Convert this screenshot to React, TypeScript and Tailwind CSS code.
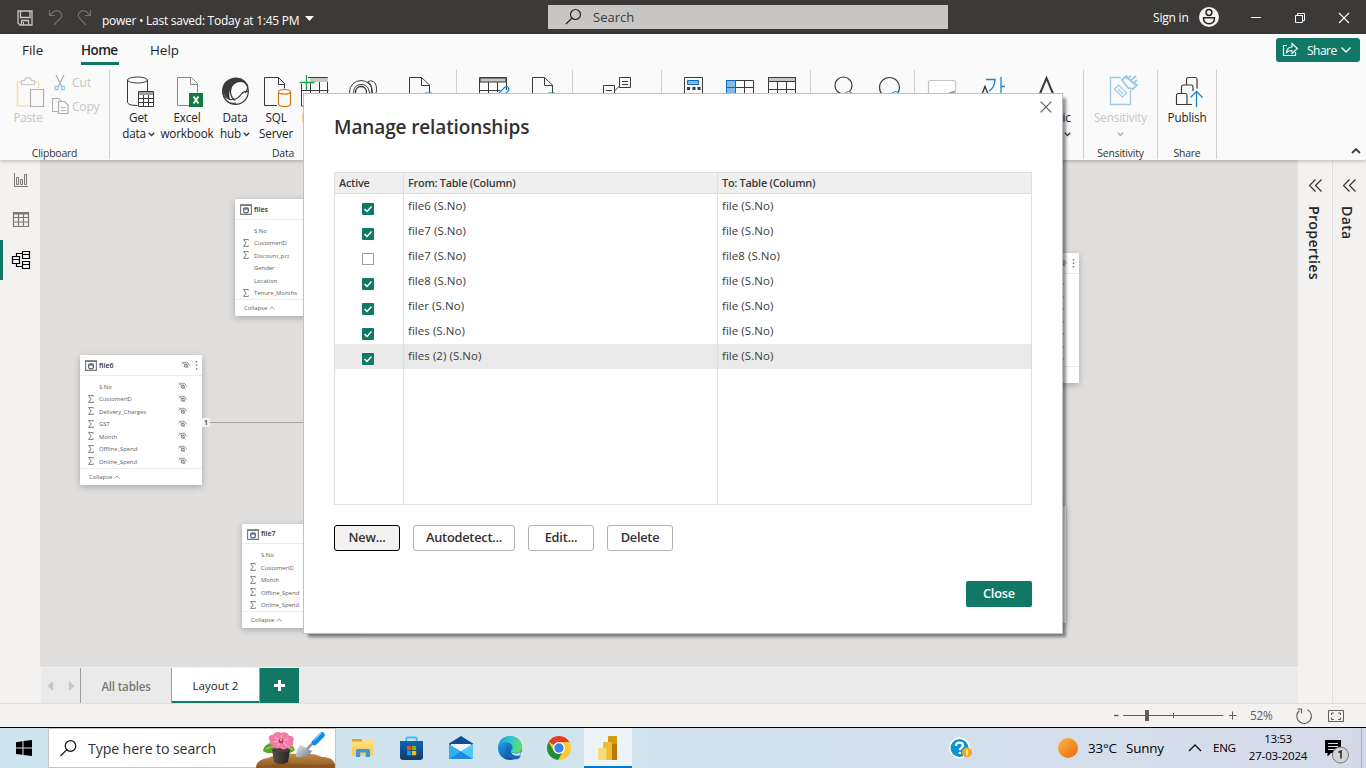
import React from 'react';

type IconProps = { x: number; y: number; w: number; h: number; children: React.ReactNode; className?: string };

/* Icon drawn in window coordinates: the view box starts at (x, y). */
function Icon({ x, y, w, h, children, className = '' }: IconProps) {
  return (
    <svg width={w} height={h} viewBox={`${x} ${y} ${w} ${h}`} fill="none" className={`block shrink-0 ${className}`}>
      {children}
    </svg>
  );
}

function Chevron({ color = '#3b3a39' }: { color?: string }) {
  return (
    <svg width="7" height="5" viewBox="0 0 7 5" fill="none" className="block">
      <path d="M0.8 0.8 3.5 3.6 6.2 0.8" stroke={color} strokeWidth="1.4" />
    </svg>
  );
}

/* ------------------------------------------------------------ title bar */

function TitleBar() {
  return (
    <header className="flex h-[34px] shrink-0 bg-[#3b3a39] text-white">
      <Icon x={0} y={0} w={102} h={34}>
        <path d="M18 11h14v14h-12l-2-2zM20.500 11v6.500h9.500v-6.500M21.500 25v-4.500h7v4.500" stroke="#c8c6c4" strokeWidth="1.300" />
        <path d="M23.500 22v3" stroke="#c8c6c4" />
        <path d="M49.500 10v5.500h5.500M49.800 15.300l3.500-3.300c2-1.600 4.500-1.700 6.500-.2 2.200 1.900 2.300 4.600.5 6.700l-6.300 6.300" stroke="#73716f" strokeWidth="1.200" />
        <path d="M90.500 10v5.500h-5.500M90.200 15.300l-3.500-3.300c-2-1.600-4.500-1.700-6.500-.2-2.200 1.900-2.300 4.600-.5 6.700l6.300 6.300" stroke="#73716f" strokeWidth="1.200" />
      </Icon>
      <div className="flex w-[446px] items-center pt-[7px] text-[12px] tracking-[-0.27px]">
        <span className="whitespace-nowrap">power • Last saved: Today at 1:45 PM</span>
        <svg width="9" height="5" viewBox="0 0 9 5" className="mb-[4px] ml-[6px]"><path d="M0 0h9L4.500 5z" fill="#fff" /></svg>
      </div>
      <div className="mr-[204px] mt-[5px] flex h-6 w-[400px] items-center bg-[#c8c6c4] text-[13px] text-[#3b3a39]">
        <Icon x={548} y={5} w={45} h={24}>
          <circle cx="575.500" cy="14.500" r="5" stroke="#252423" strokeWidth="1.200" />
          <path d="M571.800 18.300 566 24" stroke="#252423" strokeWidth="1.200" />
        </Icon>
        <span className="pt-px">Search</span>
      </div>
      <div className="flex w-[46px] items-center whitespace-nowrap pl-px pt-[2px] text-[12px] tracking-[-0.2px]">Sign in</div>
      <Icon x={1198} y={0} w={168} h={34}>
        <circle cx="1209" cy="17" r="10" fill="#f3f2f1" />
        <circle cx="1209" cy="12.500" r="2.900" stroke="#252423" strokeWidth="1.500" />
        <path d="M1203.500 17.800h11c.2 3.800-2.200 5.900-5.500 5.900s-5.700-2.100-5.500-5.900z" stroke="#252423" strokeWidth="1.500" />
        <path d="M1251 17.500h10" stroke="#fff" />
        <path d="M1295.500 15.500h7v7h-7zM1297.500 15.500v-2h7v7h-2" stroke="#fff" />
        <path d="M1339 13l10 10M1349 13l-10 10" stroke="#fff" strokeWidth="1.100" />
      </Icon>
    </header>
  );
}

/* --------------------------------------------------------------- ribbon */

function MenuRow() {
  return (
    <div className="flex h-8 shrink-0 justify-between text-[13.400px] text-[#252423]">
      <nav className="flex pl-[22px]">
        <span className="w-[59px] pt-[6px]">File</span>
        <span className="mr-[31px] h-[31px] w-[38px] whitespace-nowrap border-b-[3px] border-[#117865] pt-[6px] font-semibold tracking-[-0.55px]">Home</span>
        <span className="pt-[6px]">Help</span>
      </nav>
      <div className="mr-[6px] mt-[4px] flex h-6 w-[84px] items-center rounded-[3px] bg-[#117865] text-[12px] font-medium text-white">
        <Icon x={1276} y={38} w={31} h={24}>
          <path d="M1287 45.500h-3.500v10h12v-3.500" stroke="#fff" strokeWidth="1.200" />
          <path d="M1286.500 52.500c.5-4 2.500-5.500 5.500-5.500v-3.500l5.500 5-5.500 5v-3c-2.500 0-4 .5-5.500 2z" stroke="#fff" strokeWidth="1.100" />
        </Icon>
        <span className="w-[34px] pt-[2px] tracking-[-0.5px]">Share</span>
        <svg width="10" height="6" viewBox="0 0 10 6" fill="none"><path d="M.5.5 5 5 9.500.5" stroke="#fff" strokeWidth="1.300" /></svg>
      </div>
    </div>
  );
}

type CellProps = { x: number; w: number; label?: string; second?: string; arrow?: boolean; faded?: boolean; children: React.ReactNode };

function RibbonButton({ x, w, label, second, arrow, faded, children }: CellProps) {
  return (
    <div className={`flex shrink-0 flex-col items-center text-[11.700px] leading-4 tracking-[-0.14px] ${faded ? 'text-[#c8c6c4]' : 'text-[#252423]'}`}>
      <Icon x={x} y={74} w={w} h={36}>{children}</Icon>
      <div className="-mt-px flex h-4 w-0 justify-center whitespace-nowrap">{label}</div>
      <div className="flex h-4 w-0 items-center justify-center gap-[2px] whitespace-nowrap">
        {second}
        {arrow && <span className="pt-[3px]"><Chevron color={faded ? '#b3b0ad' : '#3b3a39'} /></span>}
      </div>
    </div>
  );
}

function Group({ name, className, children }: { name?: string; className: string; children: React.ReactNode }) {
  return (
    <section className={`flex h-[89px] shrink-0 flex-col border-r border-[#d2d0ce] ${className}`}>
      <div className="flex h-[75px] shrink-0 pt-[4px]">{children}</div>
      <div className="h-[14px] text-center text-[10.400px] leading-[17px] tracking-[-0.2px] text-[#323130]">{name}</div>
    </section>
  );
}

const ink = '#3b3a39';

function Ribbon() {
  return (
    <div className="relative flex h-[94px] shrink-0 pt-[4px]">
      <Group name="Clipboard" className="w-[110px]">
        <RibbonButton x={0} w={56} label="Paste" faded>
          <path d="M22 82h-4.500v24H31M34 82h4.500v6" stroke="#f5dfb8" strokeWidth="1.700" />
          <path d="M21.500 84.500v-4h3c.4-2 1.500-3 3.500-3s3 1 3.500 3h3v4z" stroke="#c8c6c4" strokeWidth="1.200" />
          <path d="M30.500 89.500h13v17h-13z" fill="#fafafa" stroke="#b3b0ad" strokeWidth="1.200" />
        </RibbonButton>
        <div className="-mt-[3px] flex flex-col text-[12px] text-[#c8c6c4]">
          <div className="flex h-6 items-center">
            <Icon x={56} y={71} w={16} h={24} className="-ml-[2px] mr-[2px]">
              <path d="M58 75l6 12M66 75l-6 12" stroke="#b3b0ad" strokeWidth="1.300" />
              <path d="M57 86.500h3v3h-3zM63.500 86.500h3v3h-3z" stroke="#9bc7e4" strokeWidth="1.300" />
            </Icon>
            <span>Cut</span>
          </div>
          <div className="flex h-6 items-center">
            <Icon x={52} y={95} w={20} h={24} className="-ml-[4px]">
              <path d="M59 111.500h-6.500v-13h6l3 2.500" stroke="#b3b0ad" strokeWidth="1.200" />
              <path d="M58.500 101.500h6l3.500 3.500v8.500h-9.500zM61 107.500h4.500M61 110.500h4.500" stroke="#b3b0ad" strokeWidth="1.200" />
            </Icon>
            <span className="tracking-[-0.2px]">Copy</span>
          </div>
        </div>
      </Group>
      <Group name="Data" className="w-[347px] pl-[4px] [&>div:last-child]:-ml-[4px]">
        <RibbonButton x={114} w={49} label="Get" second="data" arrow>
          <ellipse cx="137.500" cy="80" rx="10" ry="3" stroke={ink} />
          <path d="M127.500 80v22c0 2 3 3.500 10 3.500M147.500 80v11" stroke={ink} />
          <path d="M138.500 91.500h15v15h-15zM138.500 98.500h15M138.500 102.500h15M143.500 94v12.500M148.500 94v12.500" fill="#fff" stroke={ink} />
          <path d="M139 92h14v3h-14z" fill="#a19f9d" />
        </RibbonButton>
        <RibbonButton x={163} w={48} label="Excel" second="workbook">
          <path d="M189 105.500h-11.500v-28h14l6 6v9M190.500 77.500v7h7" stroke="#8a8886" />
          <path d="M189 93h14v14h-14z" fill="#107c41" />
          <path d="M193.500 96.500l5 7M198.500 96.500l-5 7" stroke="#fff" strokeWidth="1.800" />
        </RibbonButton>
        <RibbonButton x={211} w={48} label="Data" second="hub" arrow>
          <circle cx="235.500" cy="91.500" r="12.800" stroke={ink} strokeWidth="1.200" />
          <path d="M230 79c7-3.500 15-.2 17.500 5.500-5-3.500-10-3.500-14 .5-4 4-5 9-3.500 14-4-1-7.500-6-7.500-10 0-4 3-8.500 7.500-10z" fill={ink} />
          <path d="M241 80c-6 0-10.500 5-10.500 11.500 0 4 2 7 4.500 9M222.500 92c1 5 5.500 8 10.500 7.500 4-.5 6-2 8-5 2-2.500 4-3.500 7-3M247 84c1.500 3 .5 6-1.500 9M226 100c2 3 7 4 10 3" stroke={ink} strokeWidth="1.200" />
        </RibbonButton>
        <RibbonButton x={259} w={34} label="SQL" second="Server">
          <path d="M277 105.500h-12.500v-28h14l6 6v5M278.500 77.500v7h6" stroke={ink} />
          <path d="M278.500 92v12c0 1.500 2.500 2.500 6.500 2.500s5.500-1 5.500-2.500V92" fill="#fafafa" stroke="#d8730f" strokeWidth="1.200" />
          <ellipse cx="284.500" cy="91.800" rx="6" ry="2.300" fill="#fafafa" stroke="#d8730f" strokeWidth="1.200" />
        </RibbonButton>
        <RibbonButton x={293} w={46} label="Enter">
          <path d="M301.500 84v22h26v-28.500H308M301.500 90.500h27M310.500 82v12M319.500 82v12" stroke={ink} />
          <path d="M310 78h18v4h-18z" fill="#c8c6c4" />
          <path d="M306.500 75v15M299.500 82.500h15" stroke="#16a34a" strokeWidth="1.300" />
        </RibbonButton>
        <RibbonButton x={339} w={48}>
          <circle cx="361" cy="92" r="11.500" stroke={ink} />
          <circle cx="361" cy="92" r="5.500" stroke={ink} strokeWidth="1.300" />
          <path d="M354 94c-1.500-6 3-10 8-9.500 5 .4 7 4 7.500 9M367 83c1-3 9-4 9.500 5 .2 2 0 4-1 6M368 82c4 2 4 8 3 12" stroke={ink} />
        </RibbonButton>
        <RibbonButton x={387} w={64}>
          <path d="M409.500 106v-28.500h12l8 7.500v8M421.500 77.500v8h8" stroke={ink} />
          <path d="M425 93h7" stroke="#1a86d0" />
        </RibbonButton>
      </Group>
      <Group className="w-[116px] pl-[12px]">
        <RibbonButton x={469} w={48}>
          <path d="M479.500 106V77.500h27V90M479.500 90.500H500M488.500 82v12M497.500 82v10" stroke={ink} />
          <path d="M480 78h26v4h-26z" fill="#c8c6c4" stroke={ink} />
          <path d="M499 93l6-6q2.500-1.500 3.500 1t-1 3.500l-4 4" stroke="#1a86d0" strokeWidth="1.300" />
        </RibbonButton>
        <RibbonButton x={517} w={52}>
          <path d="M532.500 106v-28.500h12l8 7.500v8M544.500 77.500v8h8" stroke={ink} />
          <path d="M548 93h7" stroke="#16a34a" />
        </RibbonButton>
      </Group>
      <Group className="w-[89px]">
        <RibbonButton x={573} w={88}>
          <path d="M619.500 77.500h11v10h-11zM603.500 85.500h11v12h-11zM614.500 91l5-5M622 81.500h6M622 84.500h6M606 90.500h6M606 93.500h6" stroke={ink} />
        </RibbonButton>
      </Group>
      <Group className="w-[149px]">
        <RibbonButton x={662} w={54}>
          <path d="M684.500 106V77.500h18V106" stroke={ink} />
          <path d="M687.500 80.500h11v4h-11z" fill="#83bbe8" stroke="#0f6cbd" />
          <path d="M687 87h3v3h-3zM692.500 87h3v3h-3zM697.500 87h3v3h-3z" fill={ink} />
        </RibbonButton>
        <RibbonButton x={716} w={48}>
          <path d="M727 81h8v18h-8z" fill="#83bbe8" />
          <path d="M726.500 100V80.500h27V100M735.500 81v15M744.500 81v15M726.500 87.500h27" stroke={ink} />
          <path d="M726.500 94V80.500h9M726.500 87.500h9v6M735.500 81v12" stroke="#0f6cbd" />
        </RibbonButton>
        <RibbonButton x={764} w={44}>
          <path d="M768.500 106V77.500h27V106M777.500 82v12M786.500 82v12M768.500 89.500h27" stroke={ink} />
          <path d="M768.500 77.500h27v4h-27z" fill="#c8c6c4" stroke={ink} />
        </RibbonButton>
      </Group>
      <Group className="w-[104px] pl-[10px]">
        <RibbonButton x={821} w={46}>
          <circle cx="843.500" cy="85.500" r="8.500" stroke={ink} strokeWidth="1.200" />
          <circle cx="848.500" cy="95.500" r="4" fill="#fafafa" stroke="#1a86d0" />
        </RibbonButton>
        <RibbonButton x={867} w={46}>
          <circle cx="889.500" cy="87.500" r="10" stroke={ink} strokeWidth="1.200" />
          <circle cx="895.500" cy="95.500" r="4" fill="#fafafa" stroke="#1a86d0" />
        </RibbonButton>
      </Group>
      <Group className="w-[169px]">
        <RibbonButton x={915} w={54}>
          <rect x="928.500" y="80.500" width="27" height="20" rx="2" fill="#fff" stroke="#c8c6c4" strokeWidth="1.200" />
          <path d="M949 93.500l6-2" stroke="#a19f9d" strokeWidth="2" />
        </RibbonButton>
        <RibbonButton x={969} w={54}>
          <path d="M982 94l3-7.500 3 7.500" stroke={ink} strokeWidth="1.400" />
          <path d="M986 79.500h9c0 5-2 9-6 11.500M1001 77v18M1001 86.500h4" stroke="#1a86d0" strokeWidth="1.300" />
        </RibbonButton>
        <RibbonButton x={1023} w={46} label="Linguistic" second="schema" arrow>
          <path d="M1039 96l7.500-18 7.500 18" stroke={ink} strokeWidth="2" />
        </RibbonButton>
      </Group>
      <Group name="Sensitivity" className="w-[74px]">
        <RibbonButton x={1084} w={73} label="Sensitivity" arrow faded>
          <path d="M1121 77.500h-10.500v27h20V90" stroke="#9dcbe8" strokeWidth="1.400" />
          <path d="M1114.500 89l4-4 8 8-4 4zM1118 89l5 5" stroke="#9dcbe8" strokeWidth="1.200" />
          <path d="M1122 80l4-4 6 6 5 3-4 4-5-1zM1126 79l5-3M1130 81l6-5M1133 84l4-4" stroke="#9dcbe8" strokeWidth="1.800" />
        </RibbonButton>
      </Group>
      <Group name="Share" className="w-[59px]">
        <RibbonButton x={1158} w={58} label="Publish">
          <path d="M1176.500 104.500v-9q0-2 2-2h7q1.500 0 1.500 2v9zM1181.500 93v-6q0-2 2-2h8q1.500 0 1.500 2v4M1187 104.500h5M1186.500 85v-5.500q0-2 2-2h7q1.500 0 1.500 2v9" stroke={ink} strokeWidth="1.200" />
          <path d="M1196.500 107V91.500M1190.500 97.500l6-6 6 6" stroke="#1a86d0" strokeWidth="1.300" />
        </RibbonButton>
      </Group>
      <div className="flex flex-1 items-end justify-end pb-[5px] pr-[5px]">
        <svg width="10" height="8" viewBox="0 0 10 8" fill="none"><path d="M1 6 5 2l4 4" stroke={ink} strokeWidth="1.800" /></svg>
      </div>
    </div>
  );
}

/* --------------------------------------------------------- model canvas */

function HiddenEye() {
  return (
    <svg width="9" height="8" viewBox="0 0 9 8" fill="none" className="block">
      <path d="M.5 3.200C2 1.600 3.300 1.200 4.800 1.200S7.800 2.200 8.500 4.500" stroke="#7a7876" strokeWidth=".8" />
      <circle cx="4.800" cy="4.600" r="1.600" stroke="#605e5c" strokeWidth=".9" />
      <path d="M1 .5 7.500 7.200" stroke="#7a7876" strokeWidth=".7" />
    </svg>
  );
}

function TableCard({ name, fields, className }: { name: string; fields: [string, boolean][]; className: string }) {
  return (
    <div className={`absolute w-[122px] rounded-[1px] bg-white text-[5.900px] text-[#605e5c] shadow-[0_2px_7px_rgba(0,0,0,0.25)] ${className}`}>
      <div className="flex h-[20.500px] items-center border-b border-[#edebe9] pl-[5px] pr-[4px] pt-px text-[6.600px] font-semibold text-[#323130]">
        <svg width="12" height="11" viewBox="0 0 12 11" fill="none" className="mt-px">
          <path d="M.6 1h10.800v9.400H.6z" stroke="#7a7876" strokeWidth="1.100" />
          <path d="M0 .3h12v1.700H0z" fill="#7a7876" />
          <rect x="3.600" y="3.900" width="4.800" height="5" rx="1.800" stroke="#4a5f78" strokeWidth="1.200" />
          <path d="M3.600 5h4.800" stroke="#4a5f78" strokeWidth="1.200" />
        </svg>
        <span className="ml-[2px] flex-1 pt-px text-[7px]">{name}</span>
        <HiddenEye />
        <svg width="3" height="9" viewBox="0 0 3 9" className="ml-[5px]"><path d="M.8 0h1.400v1.400H.8zM.8 3.500h1.400v1.400H.8zM.8 7h1.400v1.400H.8z" fill="#7a7876" /></svg>
      </div>
      <div className="pt-[4.500px]">
        {fields.map(([field, numeric]) => (
          <div key={field} className="flex h-[12.500px] items-center pl-[8px] pr-[15px]">
            <span className="w-[11px]">
              {numeric && <svg width="6" height="8" viewBox="0 0 6 8" fill="none" className="block"><path d="M5.300 1.500V.6H.6L3.200 4 .6 7.400h4.700v-1" stroke="#605e5c" strokeWidth=".8" /></svg>}
            </span>
            <span className="flex-1 pt-[2px]">{field}</span>
            <HiddenEye />
          </div>
        ))}
      </div>
      <div className="flex h-[17px] items-center gap-[2px] border-t border-[#edebe9] pl-[9px]">
        <span className="pt-px">Collapse</span>
        <svg width="6" height="4" viewBox="0 0 6 4" fill="none"><path d="M.5 3.500 3 .8l2.500 2.700" stroke="#7a7876" strokeWidth=".7" /></svg>
      </div>
    </div>
  );
}

const file6: [string, boolean][] = [['S.No', false], ['CustomerID', true], ['Delivery_Charges', true], ['GST', true], ['Month', true], ['Offline_Spend', true], ['Online_Spend', true]];
const files: [string, boolean][] = [['S.No', false], ['CustomerID', true], ['Discount_pct', true], ['Gender', false], ['Location', false], ['Tenure_Months', true]];
const file7: [string, boolean][] = [['S.No', false], ['CustomerID', true], ['Month', true], ['Offline_Spend', true], ['Online_Spend', true]];

function Canvas() {
  return (
    <div className="relative h-[507px] overflow-hidden bg-[#e0dfdd]">
      <TableCard name="files" fields={files} className="left-[195px] top-[39px]" />
      <TableCard name="file6" fields={file6} className="left-[40px] top-[195px]" />
      <TableCard name="file7" fields={file7} className="left-[202px] top-[363.500px]" />
      <TableCard name="" fields={file6} className="left-[917px] top-[93px]" />
      <div className="absolute left-[904px] top-[346px] h-[117px] w-[122px] bg-white shadow-[0_2px_7px_rgba(0,0,0,0.25)]" />
      <div className="absolute left-[170px] top-[262px] h-px w-[120px] bg-[#a6a4a2]" />
      <div className="absolute left-[162px] top-[258px] flex h-[9px] w-[8px] items-center justify-center bg-[#f3f2f1] pt-px text-[7px] font-bold text-[#605e5c]">1</div>
    </div>
  );
}

function SideRail() {
  return (
    <aside className="w-10 shrink-0 bg-[#f3f2f1]">
      <Icon x={0} y={160} w={40} h={120}>
        <path d="M0 240h3v40H0z" fill="#117865" />
        <path d="M14.500 173v13.500H28M16.500 177.500v7h2v-7zM20.500 179.500v5h2v-5zM24.500 174.500v10h2v-10z" stroke="#7a7876" />
        <path d="M13.500 212.500h15v14h-15zM13.500 217.500h15M13.500 222h15M18.500 214v12.500M23.500 214v12.500" stroke="#7a7876" strokeWidth="1.200" />
        <path d="M13.500 213.500h15" stroke="#7a7876" strokeWidth="2" />
        <path d="M12.500 256.500h7v7h-7zM22.500 251.500h7v7h-7zM22.500 261.500h7v7h-7zM12.500 259.500h7M22.500 254.500h7M22.500 264.500h7M16.500 256v-2.500h6M16.500 264v2.500h6" stroke="#000" strokeWidth="1.200" />
      </Icon>
    </aside>
  );
}

function SidePane({ title, className, offset }: { title: string; className: string; offset: string }) {
  return (
    <aside className={`flex shrink-0 flex-col items-center bg-[#f3f2f1] pt-[19px] ${className}`}>
      <svg width="13" height="13" viewBox="0 0 13 13" fill="none"><path d="M6.500.5l-6 6 6 6M12.500.5l-6 6 6 6" stroke="#323130" strokeWidth="1.200" /></svg>
      <span className={`mt-[14px] text-[14.200px] font-semibold leading-5 tracking-[0.26px] text-[#252423] [writing-mode:vertical-rl] ${offset}`}>{title}</span>
    </aside>
  );
}

function PageTabs() {
  return (
    <div className="flex h-[36px] border-l border-t border-[#f3f2f1] bg-[#eaeaea] text-[11.600px]">
      <Icon x={41} y={668} w={39} h={35}>
        <path d="M53 681v10l-5.500-5zM69 681v10l5.500-5z" fill="#c8c6c4" />
      </Icon>
      <div className="flex w-[92px] items-center justify-center border-x border-[#a19f9d] pt-[2px] font-semibold tracking-[-0.2px] text-[#7a7876]">All tables</div>
      <div className="flex w-[87px] items-center justify-center border-b-2 border-[#117865] bg-white pt-[2px] font-medium tracking-[-0.05px] text-[#252423]">Layout 2</div>
      <div className="flex w-[40px] items-center justify-center border-l border-[#a19f9d] bg-[#117865]">
        <svg width="11" height="11" viewBox="0 0 11 11"><path d="M4 0h3v4h4v3H7v4H4V7H0V4h4z" fill="#fff" /></svg>
      </div>
    </div>
  );
}

function StatusBar() {
  return (
    <div className="flex h-6 shrink-0 justify-end border-t border-[#e1dfdd] bg-[#f3f2f1] text-[11.800px] text-[#605e5c]">
      <Icon x={1110} y={704} w={140} h={23}>
        <path d="M1114 715.500h4.500" stroke="#605e5c" strokeWidth="1.500" />
        <path d="M1123 715.500h100M1173.500 713v5M1229 715.500h7.500M1232.500 711.500v8" stroke="#605e5c" />
        <path d="M1145 710h4v11h-4z" fill="#605e5c" />
      </Icon>
      <span className="w-[40px] pt-[3px] tracking-[-0.3px]">52%</span>
      <Icon x={1290} y={704} w={76} h={23}>
        <path d="M1299.500 710.500a7.300 7.300 0 1 0 8-.8M1297.500 709h4v4.500" stroke="#605e5c" strokeWidth="1.100" />
        <path d="M1328.500 710.500h15v11h-15z" stroke="#605e5c" />
        <path d="M1331.500 715v-2h2.500M1338 713h2.500v2M1331.500 717.500v2h2.500M1338 719.500h2.500v-2" stroke="#605e5c" />
      </Icon>
    </div>
  );
}

/* --------------------------------------------------------------- dialog */

const relations = [
  ['file6 (S.No)', 'file (S.No)', true],
  ['file7 (S.No)', 'file (S.No)', true],
  ['file7 (S.No)', 'file8 (S.No)', false],
  ['file8 (S.No)', 'file (S.No)', true],
  ['filer (S.No)', 'file (S.No)', true],
  ['files (S.No)', 'file (S.No)', true],
  ['files (2) (S.No)', 'file (S.No)', true],
] as const;

function Checkbox({ on }: { on: boolean }) {
  return on ? (
    <svg width="12" height="12" viewBox="0 0 12 12" fill="none" className="block">
      <rect width="12" height="12" rx="1" fill="#117865" />
      <path d="M2.500 6 5 8.500 9.500 3.500" stroke="#fff" strokeWidth="1.500" />
    </svg>
  ) : (
    <span className="block size-3 border border-[#a19f9d] bg-white" />
  );
}

const headCell = 'border-b bg-[#efefef] pl-[4px] pt-[2px] text-[10.900px] font-semibold tracking-[-0.25px]';

function Dialog() {
  return (
    <div className="absolute left-[303px] top-[93px] z-20 flex h-[541px] w-[760px] flex-col border border-[#c2c0be] bg-white px-[30px] shadow-[4px_4px_3px_-1px_rgba(0,0,0,0.45)]">
      <svg width="12" height="12" viewBox="0 0 12 12" fill="none" className="absolute right-[10px] top-[7px]"><path d="M.7.7l10.600 10.600M11.300.7.700 11.300" stroke="#605e5c" strokeWidth="1.200" /></svg>
      <h1 className="mt-[19px] h-[59px] text-[19px] font-semibold leading-7 tracking-[-0.12px] text-[#323130]">Manage relationships</h1>
      <div className="grid h-[333px] w-[698px] grid-cols-[68px_315px_1fr] grid-rows-[21px_repeat(7,25px)_1fr] border border-[#e1dfdd] text-[11.500px] leading-4 text-[#3b3a39] [&>*:nth-child(3n+2)]:border-x [&>*]:border-[#e1dfdd]">
        <div className={headCell}>Active</div>
        <div className={headCell}>From: Table (Column)</div>
        <div className={headCell}>To: Table (Column)</div>
        {relations.map(([from, to, on], i) => {
          const tone = i === 6 ? 'bg-[#eaeaea]' : 'bg-white';
          return (
            <React.Fragment key={i}>
              <div className={`pl-[27px] pt-[9px] ${tone}`}><Checkbox on={on} /></div>
              <div className={`pl-[4px] pt-[4px] tracking-[0.05px] ${tone}`}>{from}</div>
              <div className={`pl-[4px] pt-[4px] tracking-[0.05px] ${tone}`}>{to}</div>
            </React.Fragment>
          );
        })}
        <div /><div /><div />
      </div>
      <div className="mt-5 flex gap-[13px] text-[12.800px] font-semibold tracking-[-0.24px] text-[#323130] [&>button]:h-[26px] [&>button]:rounded-[3px] [&>button]:border">
        <button className="w-[66px] border-black bg-[#f3f2f1]">New...</button>
        <button className="w-[102px] border-[#b3b0ad]">Autodetect...</button>
        <button className="w-[66px] border-[#b3b0ad]">Edit...</button>
        <button className="w-[66px] border-[#b3b0ad]">Delete</button>
      </div>
      <button className="mt-[30px] h-[26px] w-[66px] self-end rounded-[2px] bg-[#117865] text-[12.800px] font-semibold tracking-[-0.2px] text-white">Close</button>
    </div>
  );
}

/* -------------------------------------------------------------- taskbar */

function TaskBar() {
  return (
    <footer className="flex h-[41px] shrink-0 border-t border-black bg-linear-to-r from-[#cde5ec] via-[#d2e3ee] to-[#d6dae8] text-black">
      <Icon x={0} y={728} w={48} h={40}>
        <path d="M16 742.200l6.500-.9v6.200H16zM23.500 741.100l8.500-1.100v7.500h-8.500zM16 748.500h6.500v6.300l-6.500-.9zM23.500 748.500h8.500v7.500l-8.500-1.100z" fill="#000" />
      </Icon>
      <div className="flex w-[288px] items-center border border-[#c4c4c4] bg-white text-[14.200px] text-[#323130]">
        <Icon x={49} y={728} w={39} h={40}>
          <circle cx="70.500" cy="746" r="5.300" stroke="#111" strokeWidth="1.200" />
          <path d="M66.600 749.900 60.500 756" stroke="#111" strokeWidth="1.200" />
        </Icon>
        <span className="w-[166px] whitespace-nowrap pt-px tracking-[-0.13px]">Type here to search</span>
        <Icon x={254} y={729} w={81} h={39}>
          <defs>
            <linearGradient id="soil" x1="0" y1="754" x2="0" y2="768" gradientUnits="userSpaceOnUse"><stop stopColor="#c38a45" /><stop offset="1" stopColor="#8a5620" /></linearGradient>
            <linearGradient id="pot" x1="272" y1="0" x2="292" y2="0" gradientUnits="userSpaceOnUse"><stop stopColor="#5a4d4d" /><stop offset="1" stopColor="#231c1e" /></linearGradient>
            <linearGradient id="blade" x1="298" y1="744" x2="310" y2="756" gradientUnits="userSpaceOnUse"><stop stopColor="#dfe4e8" /><stop offset="1" stopColor="#7c868e" /></linearGradient>
          </defs>
          <path d="M256 768c0-6 5-9 12-10 6-3 20-5 32-4 10-1 17 0 22 3 8 0 13 3 14 11z" fill="url(#soil)" />
          <path d="M256 768q22-6 40-4t40 0v4z" fill="#8a5620" />
          <path d="M263 751c1-6 6-9 13-8l2 8c-6 3-11 3-15 0zM282 744c5-4 11 0 13 6-4 4-9 4-13 0z" fill="#5aa62b" />
          <path d="M266 749q6-3 10-3M285 747q5 0 8 3" stroke="#a6dc57" strokeWidth="1.200" />
          <path d="M272 750h18l-2 12c-3 2.500-11 2.500-14 0z" fill="url(#pot)" />
          <ellipse cx="281" cy="750" rx="9" ry="2.500" fill="#4b3d3f" />
          <path d="M270 741c-3-3 0-7 3-6 1-3 6-4 8-2 3-2 8 0 8 3 4-1 6 3 4 6 1 4-3 6-5 5-2 3-6 3-8 1-3 1-7 0-7-3-3 0-4-2-3-4z" fill="#f27ba8" />
          <path d="M275 737l5 4 2-6M288 739l-6 2 5 5M278 746l2-5-6 1" stroke="#ffb3cf" strokeWidth="1.200" />
          <circle cx="281" cy="741" r="2.500" fill="#c62f68" /><circle cx="281" cy="740" r="1" fill="#f7d84a" />
          <path d="M300 745l12 6c-2 5-8 7-16 6 0-5 1-9 4-12z" fill="url(#blade)" />
          <path d="M307 749l7-7" stroke="#8c969e" strokeWidth="2.500" />
          <path d="M314.500 742.500 322 735" stroke="#0f8be8" strokeWidth="5.500" strokeLinecap="round" />
          <path d="M314 740l7-6.500" stroke="#6cc4ff" strokeWidth="1.500" strokeLinecap="round" />
        </Icon>
      </div>
      <Icon x={336} y={728} w={248} h={40}>
        <defs>
          <linearGradient id="edgeTop" x1="498" y1="740" x2="522" y2="746" gradientUnits="userSpaceOnUse"><stop stopColor="#1d9de0" /><stop offset=".5" stopColor="#36c6d0" /><stop offset="1" stopColor="#66e05e" /></linearGradient>
          <linearGradient id="edgeLow" x1="498" y1="742" x2="512" y2="760" gradientUnits="userSpaceOnUse"><stop stopColor="#1fa2e6" /><stop offset="1" stopColor="#0c4c9a" /></linearGradient>
          <linearGradient id="bag" x1="0" y1="740" x2="0" y2="760" gradientUnits="userSpaceOnUse"><stop stopColor="#0e66b4" /><stop offset="1" stopColor="#183a68" /></linearGradient>
          <linearGradient id="folder" x1="0" y1="740" x2="0" y2="756" gradientUnits="userSpaceOnUse"><stop stopColor="#ffe08a" /><stop offset="1" stopColor="#fbc848" /></linearGradient>
        </defs>
        <path d="M352 739h9l2 2.500v3h-11z" fill="#e0a313" />
        <path d="M352 741.500h10l1.500-1.500h9.500v15.500h-21z" fill="url(#folder)" />
        <path d="M356 757v-6.500q0-1.500 1.500-1.500h11q1.500 0 1.500 1.500v6.500h-4.200v-4.500h-5.600v4.500z" fill="#3f96d8" />
        <path d="M406.300 741.500v-3q0-1 1-1h8.400q1 0 1 1v3" stroke="#35c1f1" strokeWidth="1.800" />
        <path d="M400 741h23v16q0 3-3 3h-17q-3 0-3-3z" fill="url(#bag)" />
        <path d="M407 746h4.200v4.200H407z" fill="#f25022" /><path d="M412 746h4.200v4.200H412z" fill="#7fba00" />
        <path d="M407 751h4.200v4.200H407z" fill="#00a4ef" /><path d="M412 751h4.200v4.200H412z" fill="#ffb900" />
        <path d="M449 743.500 461 736l12 7.500v6h-24z" fill="#0d4f96" />
        <path d="M451 744h20v8l-10 4-10-4z" fill="#f2f6fa" />
        <path d="M449 744l12 7.500 12-7.500V759h-24z" fill="#32b1ee" />
        <path d="M461 751.500 473 759h-24z" fill="#1b8bdc" /><path d="M473 744V759l-12-7.500z" fill="#4dc8f7" />
        <circle cx="510" cy="748" r="12" fill="url(#edgeLow)" />
        <path d="M498.200 746c1-6.500 6-10 12-10 6.500 0 11.800 5 11.800 11 0 4-3 6-6.500 6-3 0-4.500-1-4.500-2 0-.8 1.500-1.200 1.500-3.500 0-3-3-5.300-6.500-5.300-3.500 0-6 1.600-7.800 3.800z" fill="url(#edgeTop)" />
        <path d="M509 745c-3 2-4 6-2 10 2 3 6 5 11 4 1-.5 2.500-2 3-3.500-5 2-9.500.5-11.500-3-1-2-1.500-5-.5-7.500z" fill="#1466b8" />
        <path d="M511 751c0 1.500 2 2.500 4.500 2.500 2 0 4-.5 5.500-2.500-.5 2-1 3.500-2 4.500-4 1-8-1-8-4.500z" fill="#d2e4ee" />
        <circle cx="559" cy="748" r="12" fill="#fcc934" />
        <path d="M548.600 742a12 12 0 0 1 20.800 0H559a6 6 0 0 0-5.200 3z" fill="#e33b2e" />
        <path d="M548.600 742a12 12 0 0 0 9.400 18l5-8.500a6 6 0 0 1-9.200-.5z" fill="#1e8e3e" />
        <circle cx="559" cy="748" r="6" fill="#fff" /><circle cx="559" cy="748" r="4.700" fill="#3f7ff0" />
      </Icon>
      <div className="w-12 border-b-2 border-[#0078d7] bg-[#edf4f8]">
        <Icon x={584} y={728} w={48} h={38}>
          <rect x="608" y="736" width="9" height="24" rx="1" fill="#d79a0c" />
          <path d="M612 744h5v15q0 1-1 1h-4z" fill="#b87708" />
          <rect x="603" y="742" width="9" height="18" rx="1" fill="#eebd33" />
          <rect x="598" y="748" width="8.500" height="12" rx="1" fill="#f8dc78" />
        </Icon>
      </div>
      <Icon x={632} y={728} w={456} h={40}>
        <defs><linearGradient id="sun" x1="1060" y1="740" x2="1074" y2="757" gradientUnits="userSpaceOnUse"><stop stopColor="#f6b33c" /><stop offset="1" stopColor="#f26f10" /></linearGradient></defs>
        <circle cx="959.500" cy="748" r="10.500" fill="#fff" /><circle cx="959.500" cy="748" r="9" fill="#0b93d6" />
        <path d="M956 746q0-3.300 3.500-3.300t3.500 2.800c0 2-3.200 2.300-3.200 4.700M959.800 752v2" stroke="#fff" strokeWidth="2.200" />
        <circle cx="967" cy="752.500" r="5" fill="#f7a81b" /><path d="M967 749.500v6" stroke="#fff" strokeWidth="1.400" />
        <circle cx="1068" cy="748" r="10" fill="url(#sun)" />
      </Icon>
      <span className="w-[38px] pt-[10px] text-[13.400px] tracking-[-0.2px]">33°C</span>
      <span className="w-[59px] pt-[10px] text-[13.400px] tracking-[-0.2px]">Sunny</span>
      <Icon x={1185} y={728} w={28} h={40}><path d="M1189 751l6-6 6 6" stroke="#111" strokeWidth="1.400" /></Icon>
      <span className="w-[29px] pt-[11px] text-[11.600px] tracking-[-0.3px]">ENG</span>
      <div className="flex w-[72px] flex-col items-center pt-[2px] text-[11.600px] leading-[17px] tracking-[-0.2px]">
        <span className="tracking-[-0.4px]">13:53</span>
        <span>27-03-2024</span>
      </div>
      <Icon x={1314} y={728} w={52} h={40}>
        <path d="M1325 740h16v13h-10l-3.500 3.500V753h-2.500z" fill="#000" />
        <path d="M1328 743.500h10M1328 746.500h10M1328 749.500h7" stroke="#d6dae8" />
        <circle cx="1340.500" cy="755" r="8" fill="#d3d3d6" stroke="#77777a" />
        <path d="M1338.500 752.500l2.500-1.500v7.500" stroke="#222" strokeWidth="1.500" />
        <path d="M1361.500 728v40" stroke="#a9afbc" />
      </Icon>
    </footer>
  );
}

export default function App() {
  return (
    <div className="relative flex h-[768px] w-[1366px] flex-col overflow-hidden bg-[#f3f2f1] font-['Open_Sans','Noto_Sans',sans-serif]">
      <TitleBar />
      <div className="z-10 shrink-0 bg-[#fafafa] shadow-[0_1px_4px_rgba(0,0,0,0.25)]">
        <MenuRow />
        <Ribbon />
      </div>
      <main className="flex h-[543px] shrink-0">
        <SideRail />
        <div className="w-[1258px] shrink-0">
          <Canvas />
          <PageTabs />
        </div>
        <SidePane title="Properties" className="w-[34px]" offset="mr-[2px]" />
        <SidePane title="Data" className="w-[34px] border-l border-[#e1dfdd]" offset="mr-[5px]" />
      </main>
      <StatusBar />
      <TaskBar />
      <Dialog />
    </div>
  );
}
